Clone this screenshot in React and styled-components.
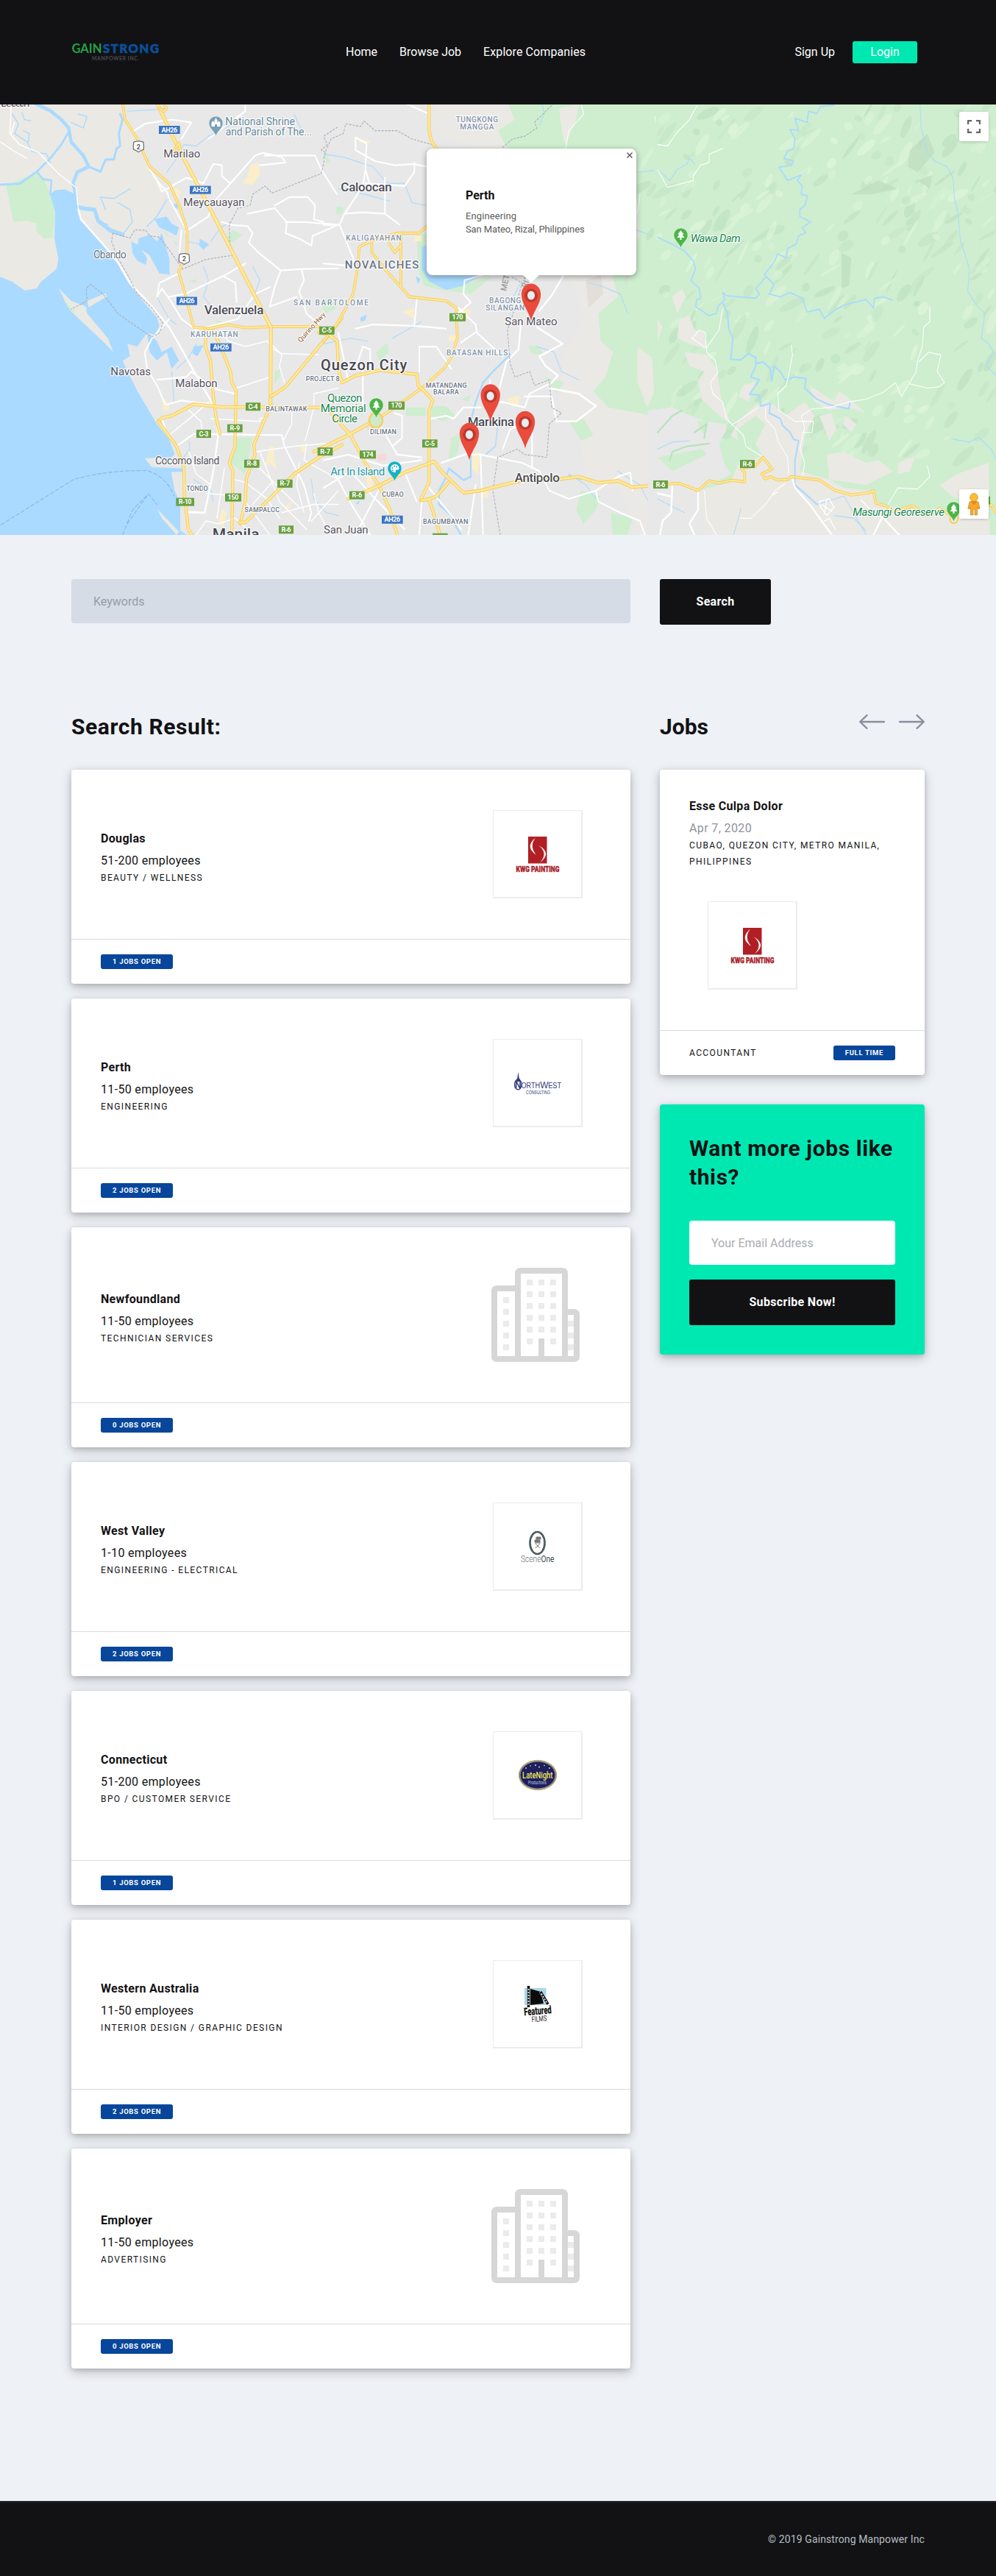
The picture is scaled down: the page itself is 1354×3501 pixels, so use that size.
import React from "react";
import styled, { createGlobalStyle } from "styled-components";

const Global = createGlobalStyle`
  *, *::before, *::after { box-sizing: border-box; }
  body {
    margin: 0;
    background: #eef1f6;
    color: #121214;
    font-family: Roboto, "Liberation Sans", sans-serif;
    font-size: 16px;
    line-height: 24px;
  }
  h2, h3, p { margin: 0; }
`;

/* ---------- header ---------- */

const Header = styled.header`
  height: 142px;
  padding: 0 107px 0 97px;
  display: flex;
  align-items: center;
  background: #121214;
`;

const BrandLogo = styled.svg`
  display: block;
  width: 120px;
  height: 30px;
`;

const Nav = styled.nav`
  display: flex;
  gap: 30px;
  margin-left: 253px;
`;

const NavLink = styled.a`
  color: #fff;
  text-decoration: none;
  letter-spacing: ${(p) => p.$track || "0"};
`;

const Account = styled.div`
  display: flex;
  align-items: center;
  gap: 24px;
  margin-left: auto;
`;

const LoginButton = styled.button`
  width: 88px;
  height: 30px;
  padding: 0;
  border: 0;
  border-radius: 3px;
  background: #00e8b2;
  color: #fff;
  font: inherit;
  line-height: 30px;
`;

/* ---------- map ---------- */

const MapArea = styled.section`
  position: relative;
  height: 585px;
  overflow: hidden;
`;

const MapCanvas = styled.svg`
  display: block;
  width: 1354px;
  height: 585px;
`;

const MapControl = styled.button`
  position: absolute;
  right: 10px;
  ${(p) => (p.$bottom ? "bottom: 22px;" : "top: 10px;")}
  width: 40px;
  height: 40px;
  padding: 0;
  border: 0;
  border-radius: 2px;
  background: #fff;
  box-shadow: 0 1px 4px -1px rgba(0, 0, 0, 0.3);
  display: flex;
  align-items: center;
  justify-content: center;
`;

const InfoWindow = styled.div`
  position: absolute;
  left: 580px;
  top: 60px;
  width: 285px;
  height: 172px;
  padding: 52px 20px 0 53px;
  border-radius: 8px;
  background: #fff;
  box-shadow: 0 2px 7px 1px rgba(0, 0, 0, 0.3);

  &::after {
    content: "";
    position: absolute;
    left: 131px;
    top: 172px;
    border: 11px solid transparent;
    border-top: 10px solid #fff;
    border-bottom: 0;
  }
`;

const InfoTitle = styled.h3`
  font-size: 16px;
  line-height: 24px;
  font-weight: 700;
`;

const InfoLine = styled.p`
  color: #5c5c5c;
  font-size: 13px;
  line-height: 18px;
  letter-spacing: -0.12px;

  ${InfoTitle} + & {
    margin-top: 7px;
    letter-spacing: 0.1px;
  }
`;

const InfoClose = styled.svg`
  position: absolute;
  right: 5px;
  top: 5px;
  width: 8px;
  height: 8px;
`;

/* ---------- page body ---------- */

const Main = styled.main`
  width: 1160px;
  margin: 0 auto;
  padding: 60px 0 180px;
`;

const Columns = styled.div`
  display: grid;
  grid-template-columns: 760px 360px;
  column-gap: 40px;
  align-items: start;
`;

const SearchRow = styled(Columns)`
  margin-bottom: 119px;
`;

const Field = styled.input`
  display: block;
  width: 100%;
  height: 60px;
  padding: 0 30px;
  border: 0;
  border-radius: 4px;
  background: ${(p) => (p.$plain ? "#fff" : "#d5dce5")};
  font: inherit;

  &::placeholder {
    color: ${(p) => (p.$plain ? "#a9acb2" : "#979ca6")};
    opacity: 1;
  }
`;

const DarkButton = styled.button`
  width: ${(p) => p.$width || "100%"};
  height: 62px;
  padding: 0;
  border: 0;
  border-radius: 3px;
  background: #121214;
  color: #fff;
  font: inherit;
  font-weight: 700;
  letter-spacing: 0.33px;
`;

const Heading = styled.h2`
  font-size: 30px;
  line-height: 39px;
  font-weight: 700;
  letter-spacing: ${(p) => p.$track || "0.58px"};
`;

const HeadingRow = styled.div`
  display: flex;
  justify-content: space-between;
  align-items: flex-start;
  height: 39px;
  margin-bottom: 39px;
`;

const Arrows = styled.svg`
  width: 89px;
  height: 20px;
  margin-top: 3px;
`;

const CompanyList = styled.div`
  display: flex;
  flex-direction: column;
  gap: 20px;
`;

const Card = styled.article`
  border-radius: 4px;
  background: ${(p) => p.$fill || "#fff"};
  box-shadow: 0 5px 15px rgba(18, 18, 20, 0.22), 0 2px 6px rgba(18, 18, 20, 0.14);
`;

const CardBody = styled.div`
  display: flex;
  align-items: center;
  justify-content: space-between;
  padding: 55px 65px 55px 40px;
`;

const CompanyInfo = styled.div`
  padding-top: 9px;
`;

const Name = styled.h3`
  font-size: 16px;
  line-height: ${(p) => p.$line || "24px"};
  font-weight: 700;
  letter-spacing: 0.33px;
`;

const Size = styled.p`
  margin-top: 6px;
  letter-spacing: 0.33px;
`;

const Category = styled.p`
  font-size: 12px;
  line-height: 22px;
  letter-spacing: 1.4px;
  text-transform: uppercase;
`;

const CardFooter = styled.div`
  display: flex;
  align-items: center;
  justify-content: space-between;
  height: 61px;
  padding: 0 40px;
  border-top: 1px solid #d5dbe8;
`;

const Badge = styled.span`
  height: 20px;
  padding: 0 16px;
  border-radius: 3px;
  background: #07469b;
  color: #fff;
  font-size: 9.5px;
  line-height: 20px;
  font-weight: 700;
  letter-spacing: 0.67px;
`;

const LogoFrame = styled.div`
  width: 122px;
  height: 120px;
  border: solid #ececec;
  border-width: 1px 2px 2px 1px;
  background: #fff;

  svg { display: block; width: 119px; height: 117px; }
`;

const BuildingSlot = styled.div`
  width: 128px;
  height: 128px;
  padding-left: 4px;

  svg { display: block; }
`;

const Sidebar = styled.aside`
  display: flex;
  flex-direction: column;
  gap: 40px;
`;

const JobBody = styled.div`
  padding: 40px 40px 55px;
`;

const JobDate = styled.p`
  margin-top: 9px;
  color: #8f92a0;
  letter-spacing: 0.38px;
`;

const JobLogo = styled.div`
  margin: 43px 0 0 25px;
`;

const Subscribe = styled.div`
  padding: 40px;
`;

const SubscribeFields = styled.div`
  display: grid;
  gap: 20px;
  margin-top: 40px;
`;

const Footer = styled.footer`
  height: 102px;
  padding: 0 97px;
  display: flex;
  align-items: center;
  justify-content: flex-end;
  border-top: 2px solid #232329;
  background: #121214;
  color: #b9bcc5;
  font-size: 14px;
  letter-spacing: 0.11px;
`;

/* ---------- map drawing ---------- */

const TILE_SCALE = "scale(0.33333 0.37623)";
const TILES = { w: 0, c: 440, e: 894 };

const water = "#aadaff";
const forest = "#ceeecf";

function Tile({ id, children }) {
  return (
    <g transform={`translate(${TILES[id]} -2) ${TILE_SCALE}`} fill="none" strokeLinejoin="round" strokeLinecap="round">
      {children}
    </g>
  );
}

function Highway({ d, w = 10 }) {
  return (
    <>
      <path d={d} stroke="#f6cf65" strokeWidth={w + 3} />
      <path d={d} stroke="#ffe99b" strokeWidth={w - 3} />
    </>
  );
}

const Street = ({ d, w = 5 }) => <path d={d} stroke="#fff" strokeWidth={w} />;
const River = ({ d, w = 4 }) => <path d={d} stroke={water} strokeWidth={w} />;
const Border = ({ d }) => <path d={d} stroke="#a9adb8" strokeWidth="3" strokeDasharray="7 7" />;

function hills() {
  let s = 17;
  const rnd = () => ((s = (s * 16807) % 2147483647) / 2147483647);
  return Array.from({ length: 330 }, () => {
    const x = 870 + rnd() * 490;
    const y = rnd() * 480;
    return { x, y, rx: 3 + rnd() * 17, ry: 1.5 + rnd() * 5, a: -25 - rnd() * 45, dark: rnd() > 0.48, o: 0.35 + rnd() * 0.5 };
  }).filter((h) => h.x > 900 || h.y < 200);
}
const HILLS = hills();

const CITY = "#575260";
const DISTRICT = "#8493ac";
const PARK = "#188650";

// tile, centre, baseline, width, text, size, colour, weight, italic
const LABELS = [
  ["w", 62, 12, 118, "Bulacan", 15, CITY, 400],
  ["w", 742, 198, 150, "Marilao", 15, CITY, 400],
  ["w", 873, 371, 250, "Meycauayan", 15, CITY, 400],
  ["w", 448, 561, 134, "Obando", 14, "#65717f", 400],
  ["w", 954, 763, 242, "Valenzuela", 17, "#4b4b55", 500],
  ["w", 874, 844, 194, "KARUHATAN", 10, DISTRICT, 500],
  ["w", 533, 984, 164, "Navotas", 15, CITY, 400],
  ["w", 801, 1027, 172, "Malabon", 15, CITY, 400],
  ["w", 764, 1304, 262, "Cocomo Island", 14, "#4f5258", 400],
  ["w", 1168, 1115, 168, "BALINTAWAK", 9, "#6a7686", 500],
  ["w", 804, 1400, 88, "TONDO", 9, "#6a7686", 500],
  ["w", 1069, 1477, 143, "SAMPALOC", 9, "#6a7686", 500],
  ["w", 962, 1577, 192, "Manila", 21, "#464651", 500],
  ["w", 1061, 80, 284, "National Shrine", 14, "#66889a", 400],
  ["w", 1096, 118, 352, "and Parish of The...", 14, "#66889a", 400],
  ["c", 625, 70, 172, "TUNGKONG", 10, DISTRICT, 500],
  ["c", 625, 97, 138, "MANGGA", 10, DISTRICT, 500],
  ["c", 174, 319, 208, "Caloocan", 17, "#4b4b55", 500],
  ["c", 204, 496, 226, "KALIGAYAHAN", 10, DISTRICT, 500],
  ["c", 237, 598, 302, "NOVALICHES", 15, "#66748a", 500],
  ["c", 30, 730, 306, "SAN BARTOLOME", 10, DISTRICT, 500],
  ["c", 740, 723, 130, "BAGONG", 10, DISTRICT, 500],
  ["c", 740, 749, 158, "SILANGAN", 10, DISTRICT, 500],
  ["c", 846, 804, 214, "San Mateo", 15, CITY, 400],
  ["c", 626, 911, 250, "BATASAN HILLS", 10, DISTRICT, 500],
  ["c", 164, 966, 352, "Quezon City", 20, "#464651", 500],
  ["c", -4, 1006, 138, "PROJECT 8", 9, "#6a7686", 500],
  ["c", 86, 1079, 142, "Quezon", 15, PARK, 400],
  ["c", 80, 1117, 186, "Memorial", 15, PARK, 400],
  ["c", 86, 1154, 104, "Circle", 15, PARK, 400],
  ["c", 500, 1028, 168, "MATANDANG", 9, "#6a7686", 500],
  ["c", 499, 1052, 104, "BALARA", 9, "#6a7686", 500],
  ["c", 243, 1195, 108, "DILIMAN", 9, "#6a7686", 500],
  ["c", 682, 1167, 190, "Marikina", 17, "#4b4b55", 500],
  ["c", 139, 1345, 222, "Art In Island", 15, "#2198a6", 400],
  ["c", 282, 1422, 88, "CUBAO", 9, "#6a7686", 500],
  ["c", 871, 1369, 184, "Antipolo", 17, "#4b4b55", 500],
  ["c", 497, 1520, 184, "BAGUMBAYAN", 9, "#6a7686", 500],
  ["c", 91, 1554, 182, "San Juan", 15, CITY, 400],
  ["e", 236, 502, 204, "Wawa Dam", 15, PARK, 400, true],
  ["e", 983, 1491, 374, "Masungi Georeserve", 15, PARK, 400, true],
];

// tile, centre x, centre y, text, colour, width
const SHIELDS = [
  ["w", 691, 97, "AH26", "#3a74c4", 86],
  ["w", 817, 314, "AH26", "#3a74c4", 86],
  ["w", 762, 715, "AH26", "#3a74c4", 84],
  ["w", 901, 883, "AH26", "#3a74c4", 86],
  ["w", 1333, 822, "C-5", "#68a03f", 62],
  ["w", 1032, 1097, "C-4", "#68a03f", 60],
  ["w", 958, 1175, "R-9", "#68a03f", 62],
  ["w", 831, 1195, "C-3", "#68a03f", 60],
  ["w", 1326, 1259, "R-7", "#68a03f", 62],
  ["w", 1027, 1303, "R-8", "#68a03f", 62],
  ["w", 1162, 1375, "R-7", "#68a03f", 62],
  ["w", 951, 1425, "150", "#68a03f", 66],
  ["w", 755, 1441, "R-10", "#68a03f", 74],
  ["w", 1167, 1541, "R-6", "#68a03f", 60],
  ["c", 546, 774, "170", "#68a03f", 66],
  ["c", 297, 1093, "170", "#68a03f", 66],
  ["c", 433, 1230, "C-5", "#68a03f", 62],
  ["c", 180, 1270, "174", "#68a03f", 66],
  ["c", 136, 1417, "R-6", "#68a03f", 62],
  ["c", 280, 1505, "AH26", "#3a74c4", 86],
  ["c", 475, 1569, "", "#68a03f", 62],
  ["e", 12, 1378, "R-6", "#68a03f", 60],
  ["e", 366, 1304, "R-6", "#68a03f", 60],
  ["e", 1328, 1436, "", "#68a03f", 56],
];

const px = (tile, u) => TILES[tile] + u / 3;
const py = (v) => v * 0.37623 - 2;

function Label({ row }) {
  const [tile, u, v, w, text, size, color, weight, italic] = row;
  return (
    <text
      x={px(tile, u - w / 2)}
      y={py(v)}
      textLength={w / 3}
      fontSize={size}
      fontWeight={weight}
      fontStyle={italic ? "italic" : "normal"}
      fill={color}
      stroke="#fff"
      strokeWidth="2.5"
      strokeOpacity="0.85"
      strokeLinejoin="round"
      paintOrder="stroke"
    >
      {text}
    </text>
  );
}

function Shield({ row }) {
  const [tile, u, v, text, color, w] = row;
  const x = px(tile, u);
  const y = py(v);
  return (
    <g>
      <rect x={x - w / 6} y={y - 5.5} width={w / 3} height="11" fill={color} />
      {text && (
        <text x={x} y={y + 3.1} textAnchor="middle" fontSize="9" fontWeight="700" fill="#fff" textLength={w / 3 - 7}>
          {text}
        </text>
      )}
    </g>
  );
}

function RouteSign({ u, v }) {
  const x = px("w", u);
  const y = py(v);
  return (
    <g>
      <path d={`M${x - 6.5},${y - 6} q6.5,-2.5 13,0 q1,6 .3,10 q-5,2 -6.8,3.6 q-1.8,-1.6 -6.8,-3.6 q-.7,-4 .3,-10z`} fill="#fff" stroke="#666b73" strokeWidth="1.2" />
      <text x={x} y={y + 3.6} textAnchor="middle" fontSize="9" fontWeight="500" fill="#444">2</text>
    </g>
  );
}

function PlacePin({ x, y, color, kind }) {
  return (
    <g transform={`translate(${x} ${y})`}>
      <path d="M0,0 C-2,-7 -9.5,-10.5 -9.5,-17.5 A9.5,9.5 0 0 1 9.5,-17.5 C9.5,-10.5 2,-7 0,0Z" fill={color} stroke="#fff" strokeOpacity=".5" strokeWidth=".8" />
      {kind === "tree" && <path d="M0,-24 l4,5.5 h-2 l3,4.5 h-4 v3 h-2 v-3 h-4 l3,-4.5 h-2z" fill="#fff" />}
      {kind === "church" && <path d="M-6,-13 v-5 l2,-3 l2,3 v-3 l2,-4 l2,4 v3 l2,-3 l2,3 v5 h-4.5 v-3 h-3 v3z" fill="#fff" />}
      {kind === "art" && (
        <>
          <path d="M0,-23 a6,5.5 0 1 0 1,11 c1.5,-.6 -1,-3 1.5,-3.5 c2,0 3.5,.5 3.5,-2.5 a6,5 0 0 0 -6,-5z" fill="#fff" />
          <g fill={color}><circle cx="-3" cy="-18" r="1.1" /><circle cx="-.5" cy="-20.5" r="1.1" /><circle cx="2.8" cy="-19.5" r="1.1" /><circle cx="-2.5" cy="-14.8" r="1" /></g>
        </>
      )}
    </g>
  );
}

function Marker({ u, v }) {
  return (
    <g transform={`translate(${px("c", u)} ${py(v)})`}>
      <path d="M0,0 C-3,-13 -13.2,-23 -13.2,-36 A13.2,14.5 0 0 1 13.2,-36 C13.2,-23 3,-13 0,0Z" fill="#e94b3c" />
      <circle cy="-34.5" r="9" fill="#c0392b" />
      <ellipse cy="-34.5" rx="5" ry="6" fill="#e9edf2" />
    </g>
  );
}

function MapDrawing() {
  return (
    <MapCanvas viewBox="0 0 1354 585" fontFamily='Roboto, "Liberation Sans", sans-serif'>
      <rect width="1354" height="585" fill="#e8e8e8" />

      <Tile id="w">
        <path fill="#ebe9e4" d="M0,0H500L540,100L610,240L680,330L610,445L480,485L390,430L330,400L240,700L0,700Z" />
        <path fill={water} d="M0,628L50,645L100,677L150,670L165,648L232,598L238,560L222,490L225,395L203,330L225,315L265,312L310,330L318,400L345,440L420,515L480,580L520,645L580,712L640,775L650,805L632,838L600,830L560,880L520,870L530,915L500,930L520,970L560,1040L590,1085L640,1160L690,1215L712,1268L700,1280L590,1283L620,1316L745,1320L745,1332L698,1333L712,1400L735,1445L735,1545L780,1570H0Z" />
        <path fill={forest} d="M25,300L95,272L150,252L185,285L205,330L225,400L215,485L180,492L145,460L150,435L110,425L55,430Z" />
        <path fill="#ebe9e4" d="M238,668L290,715L350,735L355,760L440,850L462,900L430,870L340,795L285,748Z" />
        <path fill="#ebe9e4" d="M355,715L430,688L435,700L362,738Z M640,1465L730,1548L720,1560L660,1500Z" />
        <path fill={forest} d="M255,705L310,760L285,748Z M660,458L700,485L680,480Z M708,498L732,515L715,512Z M925,485L950,460L990,475L950,503L930,500Z M765,645L805,635L800,648Z M1120,970L1145,960L1140,990L1118,1012Z M960,1208H1030L1000,1340L940,1300Z M1330,185L1348,215L1330,215Z M1300,720L1350,700L1370,740L1330,760Z M875,785L915,790L890,800Z" />
        <path fill={water} d="M535,500L560,510L600,560L595,585L560,570L540,540Z M565,490L610,475L640,500L660,470L690,560L692,620L650,615L610,550L560,520Z M630,420L680,410L700,435L730,450L720,480L690,465L650,450Z M815,490L852,510L830,530L812,515Z M600,830L640,860L660,900L700,880L730,930L700,960L680,900L640,930L610,900Z M790,880L830,875L805,915L785,905Z M700,365H725V385Z" />
        <path fill="#faeecb" d="M1020,225L1055,215L1060,260L1030,295L985,290L1010,265Z M710,305L740,320L725,345L705,330Z M610,690H630V698Z M660,1060L690,1090L690,1110L665,1110Z M905,1465L925,1480L910,1530L890,1520Z M1100,1240H1118V1290L1130,1320H1120L1100,1300L1080,1312Z M1225,1235H1245V1260H1228Z M1160,1460L1190,1440L1175,1475Z" />

        <River w={13} d="M140,0L205,28L250,60L280,90L290,140L340,190L362,230L315,250L298,290L310,335" />
        <River w={9} d="M362,230L410,248L430,205L465,203L475,165L490,155L485,110L500,60L490,40" />
        <River w={8} d="M0,295L80,292L150,248L200,205L250,150L283,100M150,248L175,275L210,280L205,330" />
        <River w={15} d="M310,375L350,382L385,385L400,425L450,460L500,475" />
        <River d="M90,35L100,60L125,65M95,100L120,110L115,140M50,40L75,75L60,110L110,140L130,175L190,185L205,215M290,70L340,90L355,50L320,40M430,385L410,340L465,345L530,310M400,425L440,440M500,475L540,430L530,385L480,360M600,445L640,410L680,350" />
        <River w={3} d="M680,250L720,200L750,150L800,155L850,120L950,75M860,500L900,450L940,430M760,500L850,515M830,590L850,640L830,700L860,730M800,870L770,920L720,960M640,700L690,780L720,800M700,970L710,1080M770,1220L775,1250L740,1290M790,1360L860,1400L870,1440M1030,590L1060,640L1035,700M1380,1490L1330,1480L1280,1430L1270,1360M1200,40L1230,100M520,30L610,25L680,20" />

        <Street w={4} d="M45,20L40,110L80,150L160,180L195,215L245,260L310,305L320,385M0,140L60,175L110,200M60,70L45,110" />
        <Street w={7} d="M320,385L330,420L420,510L480,575L530,650L600,715L690,810L735,880L785,960L850,1060L880,1110L890,1200L870,1330L835,1480L770,1478" />
        <Street w={6} d="M540,105L590,75L700,60L780,70L740,130M605,230L640,280L680,320L690,345L755,450M640,280L660,320L700,300L760,270L830,290L870,220L905,225L905,265L940,290L1040,190L1070,180L1150,195L1165,215L1060,225M940,290L880,350M740,460L730,560M755,465L850,410L860,385M905,430L940,440L1010,445L1030,470L1015,505L1060,545L1145,605L1120,665L1100,735L1210,700M1145,605L1230,600L1380,598M1230,600L1240,640L1220,680L1250,760L1300,800M755,690L910,625L1000,580M650,650L730,615M690,700L750,690M650,650L640,700L660,670L700,720L740,780L800,820L970,780L1040,690L1100,665M910,625L960,650L965,720M1010,400L1120,380L1170,430L1165,470L1220,490L1270,515L1275,480L1380,440M1120,370L1180,340L1255,340L1285,370L1280,420L1320,430M1165,430L1250,430L1380,440M940,70L1000,30L1000,0M1080,190L1285,190L1310,240L1360,310L1375,330M850,130L940,70M640,1000L760,990L780,970L840,1010L860,1030L960,1050M600,960L590,900L620,850L690,780M600,960L640,1020L660,1060L675,1090L740,1075L870,1090M660,1140L680,1190L720,1240L790,1195L900,1197L1150,1200L1160,1240L1240,1380L1270,1480L1260,1510" />
        <Street w={4} d="M965,1030L1100,990M900,820L930,860L1000,880L1090,860L1115,890L1150,905L1300,910M1105,870L1150,910L1140,950L1160,1010M690,1200L800,1120L850,1080M770,1110L820,1150L825,1190M770,1260L800,1340L860,1380M860,1140L1060,1150L1060,1140L1085,1135M1040,1260L1200,1240L1330,1230M1030,1290L1060,1320L1150,1400L1220,1460M1060,1260L1100,1350L1140,1440L1250,1540M1250,1230L1240,1290L1380,1360M955,1360L1000,1370L1090,1430L1140,1500M1155,1220L1190,1160L1190,1110M1280,1050L1280,1100L1245,1220M1280,1050L1380,1030M800,1560L840,1510L890,1520L960,1500L1010,1540M840,1410L980,1420M915,1320L885,1500M1000,1440L1100,1560M1030,1450L1110,1370M1220,1300L1210,1380L1240,1480M1280,1410L1300,1480L1350,1560M1150,1480L1280,1450L1380,1450M1270,1510L1380,1400" />
        <Border d="M460,470L455,500L480,560L520,620L560,690L620,740L665,795L650,830L620,845L560,810L480,760L420,690L370,655L352,670L355,715L290,745M460,470L530,488L550,458L595,460L610,480L650,485L690,530L745,600L840,565L950,550L937,500L935,440L970,380L1020,370L1030,330L1080,300L1110,325L1310,255L1330,180L1310,170L1335,150L1320,120L1380,85" />
        <path stroke="#88b6e8" strokeWidth="3" strokeDasharray="14 9" d="M5,1523L300,1360Q440,1325 600,1328Q680,1350 710,1420M500,1560L540,1470L605,1412L640,1450M520,1520L605,1412" />

        <Highway w={8} d="M500,0L510,60L560,130L610,230L690,290L735,380L763,460L763,540L728,610L755,690L790,810L850,815L930,800L1000,812L1105,808L1300,808L1345,835L1375,860L1380,960" />
        <Highway w={12} d="M640,0L720,150L850,370L960,560L1105,810L1103,1100" />
        <Highway w={8} d="M665,0L680,20L668,30L650,20M710,170L730,145L740,190" />
        <Highway d="M840,820L838,880L858,930L870,1060L880,1130L897,1195" />
        <Highway d="M870,825L900,880L940,970L945,1010L963,1040L958,1240L935,1300L950,1330L945,1570" />
        <Highway d="M645,1150L660,1138L700,1130L790,1088L900,1098L1100,1098L1310,1100" />
        <Highway d="M645,1150L720,1240L750,1320L752,1420L768,1540L790,1570" />
        <Highway d="M1100,1100L1035,1235L1040,1270L1005,1355L1000,1440L980,1520" />
        <Highway d="M975,1515L1000,1515L1110,1420L1200,1340L1300,1280L1395,1235" />
        <Highway d="M1105,1060L1165,1025L1300,880L1345,835L1395,775" />
      </Tile>

      <Tile id="c">
        <path fill="#ebe9e4" d="M460,0H1420V1560H1290L1200,1400L1070,1370L1040,1200L960,1100L980,900L1060,780L1010,640L860,560L700,430L640,250L600,150L480,130L440,60Z" opacity=".85" />
        <path fill={forest} d="M750,0L780,60L710,100L750,165L960,170L1000,0Z M990,0L960,170L1270,180L1275,330L1290,480L1240,560L1170,600L1200,700L1120,760L1130,860L1180,900L1150,990L1100,1040L1160,1100L1290,1120L1420,1150V0Z" />
        <path fill="#ebe9e4" d="M1180,200L1275,350L1200,560L1130,500Z M960,20L1040,5L1030,60L985,150L975,120Z M1280,880L1340,920L1360,1020L1320,1100L1280,1010Z" />
        <path fill="#dddad3" opacity=".7" d="M1160,460L1220,450L1190,520L1110,620L1130,540Z M1070,640L1130,620L1140,690L1080,740Z M1230,590L1270,570L1230,660Z" />
        <path fill={forest} d="M380,480L430,470L420,600L520,670L690,625L600,690L480,675L410,660L385,600Z M1000,1150L1060,1140L1100,1200L1050,1220Z M900,990L980,1010L950,1050Z M835,880L870,875L900,910L850,905Z M1050,1400L1130,1420L1110,1470L1060,1520L1030,1470Z M1170,1480L1260,1500L1240,1560H1180Z M215,900L260,865L265,900L225,935Z M335,1100L415,1100L415,1130L335,1130Z M440,1095H500L540,1130L480,1150L440,1130Z M520,1210L560,1190L545,1270L510,1290Z M0,185L15,180L5,210Z M50,375H78V400H50Z M560,1070L600,1055L590,1080Z" />
        <path fill={water} d="M400,520L430,510L480,600L560,615L650,620L570,660L500,675L430,645L400,600Z M375,625L395,635L385,655Z M150,775L175,765L170,785L150,790Z M130,1445L150,1435L140,1450Z" />
        <path fill="#faeecb" d="M550,745H600V765H550Z M315,755L370,740V780L340,765Z M745,1070L800,1055L795,1090L765,1095Z M600,1270L640,1260L630,1340L600,1320Z M640,1390H670V1425H645Z M510,840H545V860H510Z M145,135H190V145H145Z M370,480H400V500H370Z M170,1330L190,1320L200,1390H180Z" />
        <path fill="#f6d9d9" d="M165,1155L190,1170L180,1185Z M215,1270L255,1265L255,1290L225,1295Z" />
        <River w={3} d="M0,185L80,195L200,230L260,290L330,290L360,360L420,370M60,310L170,330L270,355M640,560L750,600L800,580M0,870L110,850L180,860M280,850L400,790M750,740L780,690L810,640M870,880L940,900L970,970L1040,1000M1080,650L1130,660L1210,690L1240,760M1160,380L1250,450L1340,480L1380,495M1000,1340L1070,1380L1110,1430M1200,1330L1290,1380L1330,1450M880,80L900,40L890,0M1180,240L1290,250L1380,240" />
        <River w={7} d="M760,910L690,970L650,1010L620,1080L600,1150L600,1290L600,1350L570,1362L510,1320L500,1350L470,1400L470,1450L520,1490L540,1530L560,1560" />
        <River w={4} d="M1000,1345L1050,1360M715,1130L700,1240L660,1270" />

        <Street w={6} d="M130,125L175,145L170,240L190,300M130,125L130,170L210,210L290,225L370,220L420,230M170,240L160,300L85,400L65,440L0,440M65,440L120,560L130,590L0,580M250,270V400L310,440M85,400L160,395L250,400M330,0L430,40L430,0M370,215V250L330,300L170,290M380,710L370,800M130,815L200,800L370,805L500,815M550,760L600,720L570,690L575,640L690,610M550,740L620,800L625,830L730,915M625,825L560,865M390,880H460L520,960M390,880V970M130,960L160,880L190,890V960M60,830L100,1000M160,970V1100M210,1130L240,1180L300,1270L400,1280M290,1120L320,1130V1210L280,1240M0,1290L100,1270L240,1310L400,1290M40,1330L120,1460L190,1560M440,1140L500,1130L530,1140L570,1100L640,1100M420,1380L530,1500L560,1540M400,1440L390,1560M330,1330L380,1440M0,1390L110,1330L200,1420L330,1540M130,1560L230,1390M590,1270L640,1270L810,1300L880,1330L920,1400M640,1270L650,1560M680,1000L660,1090L730,1080L820,1100L840,1050L930,1010M730,1250L760,1180L830,1150M850,1180V1320M620,1380L590,1560M480,1300L590,1265M920,1400L1000,1430L1110,1400L1200,1350L1250,1335L1260,1400M1110,1400L1120,1440L1210,1480L1290,1510L1310,1560M1380,1430L1340,1540L1360,1560" />
        <Street w={7} d="M980,620L930,695L880,750M805,790L795,890L745,935L720,1020L690,1120M870,810L975,870L880,915L905,950L955,985L930,1010M820,1060L930,1060L950,1150L1030,1150L1110,1095L1040,1050L920,1030" />
        <Street w={3} d="M1050,0L1060,40L1000,100L980,200M1290,330L1280,400M1350,50L1380,150" />
        <Border d="M0,200L10,170L30,130L80,110L90,75L150,85L165,65L210,100L300,100L360,130L440,150M730,160L770,130L820,120L870,90L860,70L940,0M770,630L810,650L780,740L750,820L760,940L780,990L840,970L860,1020L920,1000L930,1100L970,1120L920,1160L910,1280L820,1270L790,1250L710,1280L690,1400L720,1560" />

        <Highway d="M430,0V100L440,140L462,165" />
        <Highway w={8} d="M420,445L390,470H300L190,500L145,520L140,590L120,690L60,790L0,860" />
        <Highway w={8} d="M315,475V665M265,475L268,510L290,540L315,515M195,500L197,540L250,600L350,700L500,715L540,740L545,850L520,920L490,960L400,1030L240,1130" />
        <Highway d="M-20,830L20,835L55,860L60,960L75,1010L130,985L230,965L380,980L385,1020L410,1040L445,1075L430,1110L430,1370L395,1435" />
        <Highway d="M-40,1260L100,1200L200,1150M30,1120L110,1200L170,1300L230,1390L270,1470L300,1560" />
        <circle cx="213" cy="1146" r="27" stroke="#f6cf65" strokeWidth="8" fill="#cfeacb" />
        <Highway d="M100,1430L220,1385L330,1335L450,1295L480,1330L570,1408L640,1400L800,1365L950,1360L1040,1350L1120,1372L1200,1365L1260,1388L1360,1380L1430,1375" />
        <Highway d="M400,1435L435,1430L460,1420L510,1370M430,1430L440,1460L475,1560" />
      </Tile>

      <path fill={forest} d="M892,0H1354V585H900L884,300Z" />
      {HILLS.map((h, i) => (
        <ellipse key={i} cx={h.x} cy={h.y} rx={h.rx} ry={h.ry} transform={`rotate(${h.a} ${h.x} ${h.y})`} fill={h.dark ? "#c0e3c3" : "#ddf4d8"} opacity={h.o} />
      ))}

      <Tile id="e">
        <path fill="#bfdcbf" opacity=".75" d="M1030,170L1100,110L1130,180L1060,250L1020,230Z M790,330L900,280L980,310L870,330Z M750,540L790,560L780,660L750,670Z M1060,280L1120,260L1110,310Z" />
        <path fill="#e8e8e8" d="M-40,1110L60,1100L110,1120L200,1150L280,1160L280,1185L250,1225L270,1300L300,1340L160,1400L240,1560H-40Z" />
        <path fill="#ebe9e4" d="M160,1400L300,1370L330,1300L410,1280L300,1200L330,1150L400,1090L460,1080L520,1130L600,1080L640,1130L600,1200L580,1330L700,1360L760,1390L870,1400L900,1450L960,1460L1100,1470L1250,1500L1354,1500V1570H200Z" />
        <path fill="#ebe9e4" d="M60,700L100,670L115,700L80,760Z M90,780L130,770L150,820L190,830L200,890L130,870L80,850Z M110,900L200,910L240,960L260,1070L300,1160L240,1120L180,1070L165,1010L190,970L130,950Z M350,1020L400,1005L370,1080L330,1060Z M620,1020L720,1080L740,1040L770,1060L850,1120L780,1100L700,1110L640,1080Z M660,1130L710,1120L730,1180L700,1220Z M770,1130L810,1160L790,1190L755,1160Z M690,1270L760,1260L850,1300L900,1290L960,1330L850,1380L700,1360Z M980,1300L1050,1275L1030,1330L980,1340Z M1150,1380L1220,1340L1350,1300L1354,1480L1200,1420Z M0,780L20,810L0,860Z" />
        <path fill={forest} d="M320,1180L400,1130L440,1160L400,1230L430,1280L340,1270Z M0,1280L180,1250L200,1270L60,1330Z M160,1150L210,1145L190,1200Z" />
        <path stroke="#b5e4ba" strokeWidth="6" d="M0,1190L60,1130L100,1110M50,1290L60,1260L120,1240L210,1230M150,1190L200,1160L190,1210" />

        <River w={5} d="M720,8L665,12L650,38L615,30L610,70L560,55L575,100L540,95L560,130L555,165L530,175L515,200L555,210L545,225L495,232L530,280L585,260L570,280L590,300L585,330L612,335L600,370L580,385L580,410L625,430L590,450L605,468L575,480L565,510L530,525L525,560L490,545L475,575L435,620L475,655L455,690L500,700L540,685L590,705L610,755L660,745L680,778L720,750L760,730L850,710L880,740L885,705L920,700L958,712M440,630L400,670L415,690L400,705L285,697L265,685L275,710L245,735L240,760L210,768L155,735L160,710L175,705L170,670L135,640L155,600L145,570L110,535L60,510L0,485" />
        <River w={6} d="M265,720L285,760L290,815L307,850L298,925L340,928L370,905L400,920L400,950L380,990L415,1000L375,1052L415,1055L420,1095L460,1085L455,1120L500,1140L510,1165L540,1190L555,1215L575,1220L560,1290L560,1380L600,1410L650,1450M405,940L430,935L460,960L465,1005L475,950L500,970L520,1000L560,990L605,995L600,1030L650,1070L700,1090L780,1105L785,1080" />
        <River w={3} d="M1070,0L1075,90L1100,180L1130,210L1180,230L1205,270L1210,340L1225,400L1235,500L1255,550L1272,600L1265,680L1300,730L1335,760L1320,850L1350,870L1370,900L1340,950L1380,985M0,240L50,280L80,240L120,220L130,200L152,220M1200,1213L1270,1225L1310,1208L1360,1250L1380,1290M650,1450L760,1420L850,1560M0,1250L60,1225L130,1220M340,1465L310,1560M0,1430L110,1480M720,1490L800,1500L850,1545" />
        <Street w={3} d="M160,10L130,60L80,105L40,155L0,150M265,165L210,185L210,215L175,225L145,265L145,280L40,305L0,240M265,745L250,820L200,885M200,885L140,850L170,820L195,830L200,900L235,930L245,975L215,1010L225,1050L265,1080L280,1140L350,1200L360,1240L430,1280M545,875L550,910L535,980L525,1020L490,1050L495,1110L560,1150L635,1150L630,1190L590,1190M1110,735L1110,790L1085,810L1080,880L1060,930L1055,970L995,1060L970,1010L920,1045L850,1070L780,1080L700,1100L630,1105L585,1130L600,1170L580,1250L600,1300L590,1350M1065,935L1105,900L1155,910L1140,970L1170,1010L1150,1025L1100,1030L1030,1015M1100,1310L1110,1350L1060,1395L980,1390L940,1450M410,1100L300,1165M440,1100L440,1140L480,1180L490,1220L530,1280L535,1340M520,1375L480,1400L440,1450L380,1500L340,1500M190,1400L200,1500L240,1560" />
        <Street w={7} d="M165,1400L165,1470L130,1520L150,1560M60,1380L55,1480L20,1510L10,1560M550,1355L560,1390L620,1450L710,1560M920,1490L880,1560M900,1480L985,1560M0,1410L50,1420" />
        <path stroke="#fff" strokeWidth="4" d="M660,1440L700,1430L720,1460L690,1490L665,1460ZM670,1450L710,1475M690,1432L680,1485M680,1510L700,1500L725,1540M830,1435L870,1470M470,1415L490,1405" />
        <Highway w={8} d="M0,1378L90,1374L165,1400L210,1365L250,1373L300,1363L355,1368L355,1335L340,1320L400,1310L430,1280L467,1322L425,1340L440,1358L460,1350L490,1362L530,1360L545,1350L660,1362L720,1398L790,1416L860,1408L880,1400L890,1445L930,1455L960,1475L1040,1455L1100,1490L1150,1465L1200,1490L1300,1470L1360,1450L1380,1480" />
        <circle cx="1208" cy="1502" r="16" stroke="#f6cf65" strokeWidth="6" />
      </Tile>

      <g transform="translate(426 305) rotate(-48)">
        <text textAnchor="middle" fontSize="9.5" fill="#8d5a24" stroke="#fff" strokeWidth="2" paintOrder="stroke">Quirino Hwy</text>
      </g>
      <g fontSize="11" fontWeight="500" fill="#9a9a9a">
        <text transform="translate(688 254) rotate(-78)">METRO</text>
        <text transform="translate(716 250) rotate(-70)">RIZAL</text>
      </g>

      {LABELS.map((row, i) => <Label key={i} row={row} />)}
      {SHIELDS.map((row, i) => <Shield key={i} row={row} />)}
      <RouteSign u={565} v={157} />
      <RouteSign u={751} v={563} />
      <PlacePin x={293.5} y={43} color="#7ba0b3" kind="church" />
      <PlacePin x={511.5} y={426} color="#4cb548" kind="tree" />
      <PlacePin x={536.5} y={512} color="#17b1c6" kind="art" />
      <PlacePin x={925.5} y={195} color="#4cb548" kind="tree" />
      <PlacePin x={1296.5} y={567} color="#4cb548" kind="tree" />

      <Marker u={846} v={787} />
      <Marker u={680} v={1150} />
      <Marker u={822} v={1247} />
      <Marker u={594} v={1290} />
    </MapCanvas>
  );
}

/* ---------- logos and icons ---------- */

function GainstrongLogo() {
  return (
    <BrandLogo viewBox="0 0 120 30" fontFamily="Lato, Roboto, sans-serif">
      <text x="0.5" y="16" fontSize="16.5" fontWeight="700" fill="#22a047" textLength="41">GAIN</text>
      <text x="43" y="16" fontSize="16.5" fontWeight="900" fill="#0a4f9e" stroke="#0a4f9e" strokeWidth=".7" textLength="76">STRONG</text>
      <text x="28" y="26" fontSize="6.8" fontWeight="700" fill="#4b4b50" textLength="64">MANPOWER INC.</text>
    </BrandLogo>
  );
}

function KwgLogo() {
  return (
    <svg viewBox="1 1 119 117">
      <rect x="48" y="36" width="25.5" height="36.5" fill="#b11f24" />
      <path d="M58,37.5Q43,50 59,61Q49,49 58,37.5Z" fill="#fff" />
      <path d="M62,48Q81,58 64,71.5Q76,58 62,48Z" fill="#fff" />
      <text x="31.5" y="83.5" fontFamily="Roboto, sans-serif" fontSize="10.5" fontWeight="900" fill="#a9222a" stroke="#a9222a" strokeWidth=".3" textLength="59" lengthAdjust="spacingAndGlyphs">KWG PAINTING</text>
    </svg>
  );
}

function NorthWestLogo() {
  return (
    <svg viewBox="1 1 119 117" fontFamily='"Liberation Sans", sans-serif' fill="#343d7c">
      <path d="M34.5,45L36,55H33Z M32.5,54H36.5L38,58H31Z" />
      <ellipse cx="34.3" cy="62" rx="4.8" ry="6.8" fill="none" stroke="#343d7c" strokeWidth="1.4" />
      <text x="30" y="66.5" fontSize="13" textLength="63" lengthAdjust="spacingAndGlyphs">
        <tspan fontWeight="700">N</tspan>
        <tspan fontSize="10">ORTH</tspan>
        <tspan>W</tspan>
        <tspan fontSize="10">EST</tspan>
      </text>
      <text x="45" y="74.5" fontSize="6.5" textLength="33" lengthAdjust="spacingAndGlyphs">CONSULTING</text>
    </svg>
  );
}

function SceneOneLogo() {
  return (
    <svg viewBox="1 1 119 117" fontFamily="Roboto, sans-serif">
      <ellipse cx="60.5" cy="55" rx="10" ry="15" fill="none" stroke="#3b474c" strokeWidth="2.6" />
      <ellipse cx="60.5" cy="55" rx="10" ry="15" fill="none" stroke="#b9c0c2" strokeWidth=".8" strokeDasharray="1 1.4" />
      <path d="M59,47H65V50H59ZM57,51H64V54H57ZM57,55H65M58,62L64,56M64,62L58,56M60,50V54" fill="#777" stroke="#777" strokeWidth="1" />
      <text x="38" y="80.5" fontSize="13" fontWeight="300" fill="#6b6f72" textLength="45.5" lengthAdjust="spacingAndGlyphs">
        Scene<tspan fontWeight="400" fill="#3b474c">One</tspan>
      </text>
    </svg>
  );
}

function LateNightLogo() {
  return (
    <svg viewBox="1 1 119 117" fontFamily="Roboto, sans-serif">
      <ellipse cx="61" cy="59.5" rx="25.5" ry="20" fill="#1d1f5e" stroke="#c3b87c" strokeWidth="1.4" />
      <ellipse cx="61" cy="59.5" rx="24" ry="18.6" fill="none" stroke="#efe9b8" strokeWidth=".7" />
      <g fill="#f1ea9a"><circle cx="45" cy="50" r=".9" /><circle cx="51" cy="47" r=".8" /><circle cx="58" cy="46" r="1" /><circle cx="63" cy="48.5" r=".9" /><circle cx="70" cy="46.5" r=".8" /><circle cx="77" cy="50" r=".9" /></g>
      <text x="40" y="63.5" fontSize="13" fontWeight="500" fill="#f3e85a" textLength="41.5" lengthAdjust="spacingAndGlyphs">LateNight</text>
      <text x="48" y="72" fontSize="6.5" fill="#c9cbe6" textLength="25" lengthAdjust="spacingAndGlyphs">Productions</text>
    </svg>
  );
}

function FeaturedLogo() {
  return (
    <svg viewBox="1 1 119 117" fontFamily="Roboto, sans-serif">
      <rect x="43" y="38" width="29.5" height="23" fill="#a8d8ea" />
      <path d="M51,39L65,43L69,59L51,61Z" fill="#0b0b0b" />
      <path d="M48.5,36V63M65,43L75,59" stroke="#fff" strokeWidth="4.6" />
      <path d="M48.5,35V64M65,43L75,60" stroke="#151515" strokeWidth="3.6" />
      <path d="M48.5,39V62M66,45.5L74,59" stroke="#dbe9ee" strokeWidth="1.8" strokeDasharray="2 2" />
      <g transform="rotate(-5 60 72)">
        <text x="42.5" y="74" fontSize="15" fontWeight="900" fill="#111" textLength="37.5" lengthAdjust="spacingAndGlyphs">Featured</text>
        <text x="52" y="83.5" fontSize="10.5" fontWeight="400" fill="#222" textLength="20.5" lengthAdjust="spacingAndGlyphs">FILMS</text>
      </g>
    </svg>
  );
}

function Building() {
  const rows = [16, 32, 48, 64, 80, 96];
  return (
    <BuildingSlot>
      <svg width="120" height="128" viewBox="0 0 120 128">
        <g fill="none" stroke="#d7d7d7" strokeWidth="8">
          <path d="M36,28H8Q4,28 4,32V120Q4,124 8,124H112Q116,124 116,120V64Q116,60 112,60H100" />
          <path d="M36,124V8Q36,4 40,4H96Q100,4 100,8V124M68,96V124" />
        </g>
        <g fill="#ebebeb">
          {rows.map((y) => [48, 64, 80].filter((x) => !(x === 64 && y === 96)).map((x) => <rect key={`${x}-${y}`} x={x} y={y} width="8" height="8" />))}
          {[40, 56, 72, 88, 104].map((y) => <rect key={y} x="16" y={y} width="8" height="8" />)}
          {[72, 88, 104].map((y) => <rect key={y} x="104" y={y} width="8" height="8" />)}
        </g>
      </svg>
    </BuildingSlot>
  );
}

const framed = (Logo) => <LogoFrame><Logo /></LogoFrame>;

const COMPANIES = [
  { name: "Douglas", size: "51-200 employees", category: "Beauty / Wellness", jobs: 1, logo: framed(KwgLogo) },
  { name: "Perth", size: "11-50 employees", category: "Engineering", jobs: 2, logo: framed(NorthWestLogo) },
  { name: "Newfoundland", size: "11-50 employees", category: "Technician Services", jobs: 0, logo: <Building /> },
  { name: "West Valley", size: "1-10 employees", category: "Engineering - Electrical", jobs: 2, logo: framed(SceneOneLogo) },
  { name: "Connecticut", size: "51-200 employees", category: "BPO / Customer Service", jobs: 1, logo: framed(LateNightLogo) },
  { name: "Western Australia", size: "11-50 employees", category: "Interior Design / Graphic Design", jobs: 2, logo: framed(FeaturedLogo) },
  { name: "Employer", size: "11-50 employees", category: "Advertising", jobs: 0, logo: <Building /> },
];

export default function App() {
  return (
    <>
      <Global />
      <Header>
        <GainstrongLogo />
        <Nav>
          <NavLink>Home</NavLink>
          <NavLink>Browse Job</NavLink>
          <NavLink $track="0.09px">Explore Companies</NavLink>
        </Nav>
        <Account>
          <NavLink>Sign Up</NavLink>
          <LoginButton>Login</LoginButton>
        </Account>
      </Header>

      <MapArea>
        <MapDrawing />
        <InfoWindow>
          <InfoTitle>Perth</InfoTitle>
          <InfoLine>Engineering</InfoLine>
          <InfoLine>San Mateo, Rizal, Philippines</InfoLine>
          <InfoClose viewBox="0 0 8 8"><path d="M.5,.5L7.5,7.5M7.5,.5L.5,7.5" stroke="#555" strokeWidth="1.4" /></InfoClose>
        </InfoWindow>
        <MapControl aria-label="Toggle fullscreen view">
          <svg width="18" height="18" viewBox="0 0 18 18" fill="none" stroke="#666" strokeWidth="2.2">
            <path d="M1.1,6V1.1H6M12,1.1H16.9V6M16.9,12V16.9H12M6,16.9H1.1V12" />
          </svg>
        </MapControl>
        <MapControl $bottom aria-label="Street View">
          <svg width="18" height="31" viewBox="0 0 18 31">
            <path d="M3,12Q9,9.5 15,12L17.2,21L14.8,22L13.5,18.5V30H10V22H8V30H4.5V18.5L3.2,22L.8,21Z" fill="#f9a825" stroke="#b98a3c" strokeWidth=".7" />
            <path d="M5,11.5H13L9,16.5Z" fill="#e8822a" />
            <circle cx="9" cy="6" r="5.4" fill="#fbbf2d" stroke="#b98a3c" strokeWidth=".7" />
          </svg>
        </MapControl>
      </MapArea>

      <Main>
        <SearchRow>
          <Field placeholder="Keywords" />
          <DarkButton $width="151px">Search</DarkButton>
        </SearchRow>

        <Columns>
          <section>
            <HeadingRow>
              <Heading>Search Result:</Heading>
            </HeadingRow>
            <CompanyList>
              {COMPANIES.map((c) => (
                <Card key={c.name}>
                  <CardBody>
                    <CompanyInfo>
                      <Name>{c.name}</Name>
                      <Size>{c.size}</Size>
                      <Category>{c.category}</Category>
                    </CompanyInfo>
                    {c.logo}
                  </CardBody>
                  <CardFooter>
                    <Badge>{c.jobs} JOBS OPEN</Badge>
                  </CardFooter>
                </Card>
              ))}
            </CompanyList>
          </section>

          <section>
            <HeadingRow>
              <Heading $track="0">Jobs</Heading>
              <Arrows viewBox="0 0 89 20" fill="none" stroke="#8b8e9c" strokeWidth="2.3" strokeLinecap="round" strokeLinejoin="round">
                <path d="M34,10H1.2M10.5,1.2L1.2,10L10.5,18.800M55,10H87.800M78.500,1.200L87.800,10L78.500,18.800" />
              </Arrows>
            </HeadingRow>
            <Sidebar>
              <Card>
                <JobBody>
                  <Name $line="19px">Esse Culpa Dolor</Name>
                  <JobDate>Apr 7, 2020</JobDate>
                  <Category>Cubao, Quezon City, Metro Manila, Philippines</Category>
                  <JobLogo>{framed(KwgLogo)}</JobLogo>
                </JobBody>
                <CardFooter>
                  <Category as="span">Accountant</Category>
                  <Badge>FULL TIME</Badge>
                </CardFooter>
              </Card>
              <Card $fill="#00e8b2">
                <Subscribe>
                  <Heading>Want more jobs like this?</Heading>
                  <SubscribeFields>
                    <Field $plain placeholder="Your Email Address" />
                    <DarkButton>Subscribe Now!</DarkButton>
                  </SubscribeFields>
                </Subscribe>
              </Card>
            </Sidebar>
          </section>
        </Columns>
      </Main>

      <Footer>© 2019 Gainstrong Manpower Inc</Footer>
    </>
  );
}
